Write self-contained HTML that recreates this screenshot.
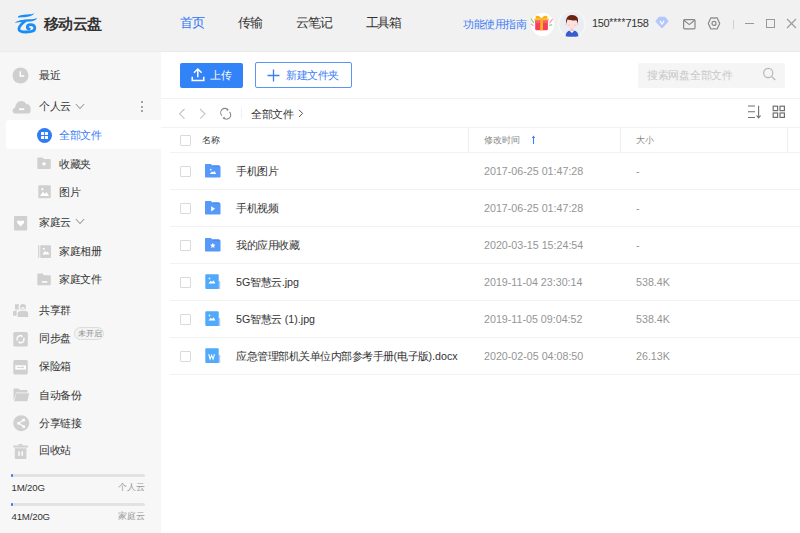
<!DOCTYPE html>
<html><head><meta charset="utf-8">
<style>
*{margin:0;padding:0;box-sizing:border-box}
html,body{width:800px;height:533px;overflow:hidden;background:#fff;font-family:"Liberation Sans",sans-serif;color:#333}
.a{position:absolute;white-space:nowrap}
svg.a{overflow:visible}
#top{position:absolute;left:0;top:0;width:800px;height:52px;background:#f1f1f1}
#side{position:absolute;left:0;top:52px;width:161px;height:481px;background:#f7f7f7}
.nav{font-size:13px;letter-spacing:-1.2px;line-height:15px;color:#333}
.si{letter-spacing:-0.5px;font-size:11px;line-height:12px;color:#333}
.hl{position:absolute;height:1px;background:#f2f2f2}
.vl{position:absolute;width:1px;background:#eeeeee}
.cb{position:absolute;width:10.5px;height:10.5px;border:1px solid #dadada;border-radius:1px;background:#fff}
.fn{letter-spacing:-0.5px;font-size:11px;line-height:12px;color:#333}
.l{font-size:10.7px;letter-spacing:0}
.dt{font-size:10.7px;line-height:11px;color:#959595}
.hd{font-size:9.4px;line-height:10px;color:#888}
</style></head><body>
<div id="top"></div>
<div class="a" style="left:0;top:51px;width:800px;height:1px;background:#ebebeb"></div>
<div id="side"></div>

<!-- ============ TOP BAR ============ -->
<svg class="a" style="left:12px;top:10px" width="30" height="28" viewBox="0 0 30 28">
  <path d="M6 6.4 C9 4.6 15 4.6 18.5 4.3 C20 4.1 21 3.6 22 2.9 C21.2 5.5 18 6.6 14 6.9 C10 7.2 8 7.3 6 7.6 Z" fill="#1a8cf5"/>
  <path d="M3 12.4 C7 9.8 13 9.4 18 9.2 C21 9.1 23 8.8 25.2 7.9 C24.2 10.3 21 11.2 17.5 11.5 C12 11.8 8 12 3 12.8 Z" fill="#1a8cf5"/>
  <path d="M13.2 11 C10 13.5 6.9 16.5 6.9 19 C6.9 21.5 9.5 22 14 22 C19.5 22 22.8 21 22.8 18.2 C22.8 15.5 20.5 14.6 18.5 14.6 C16.5 14.6 15.3 15.8 15.3 17.3 C15.3 18.5 16.2 19 17.3 18.8" fill="none" stroke="#1a8cf5" stroke-width="2.8" stroke-linecap="round"/>
</svg>
<div class="a" style="left:43.5px;top:15px;letter-spacing:-0.4px;font-size:15px;line-height:17px;font-weight:bold;color:#333">移动云盘</div>

<div class="a nav" style="left:180px;top:15px;color:#2f74f6">首页</div>
<div class="a nav" style="left:238px;top:15px">传输</div>
<div class="a nav" style="left:296px;top:15px">云笔记</div>
<div class="a nav" style="left:365.7px;top:15px">工具箱</div>

<div class="a" style="left:463px;top:18px;letter-spacing:-0.4px;font-size:11px;line-height:12px;color:#3d7ef5">功能使用指南</div>
<!-- gift -->
<div class="a" style="left:530.5px;top:12.5px;width:23px;height:23px;border-radius:50%;background:#fff"></div>
<svg class="a" style="left:530px;top:12px" width="23" height="23" viewBox="0 0 23 23">
  <path d="M11.5 6.8 C10 3.2 6.2 3 5.6 4.6 C5.2 5.8 6 6.8 7 7.2 Z M11.5 6.8 C13 3.2 16.8 3 17.4 4.6 C17.8 5.8 17 6.8 16 7.2 Z" fill="#f9ae1a"/>
  <rect x="4.3" y="6.4" width="14.5" height="2.4" rx="0.6" fill="#fcc22a"/>
  <path d="M5.2 8.6 L17.9 8.6 L17.9 17 C17.9 17.7 17.4 18.2 16.7 18.2 L6.4 18.2 C5.7 18.2 5.2 17.7 5.2 17 Z" fill="#f73d5a"/>
  <rect x="5.2" y="8.6" width="12.7" height="2.6" fill="#fb5b70"/>
  <rect x="10.2" y="6.4" width="2.8" height="11.8" fill="#f9b020"/>
  <path d="M1.2 6.8 L3.6 10.6" stroke="#7fd66a" stroke-width="1.1" stroke-linecap="round"/>
  <path d="M1.2 12 L3.2 13.6" stroke="#f894b0" stroke-width="1.1" stroke-linecap="round"/>
  <path d="M22.3 7.4 L19.8 10.8" stroke="#f894b0" stroke-width="1.1" stroke-linecap="round"/>
  <path d="M19.3 13.2 L21.8 12.9" stroke="#7fd66a" stroke-width="1.1" stroke-linecap="round"/>
</svg>
<!-- avatar -->
<svg class="a" style="left:558px;top:10px" width="28" height="29" viewBox="0 0 28 29">
  <circle cx="13.9" cy="14.2" r="13.2" fill="#eaedf2" stroke="#f8f8f8" stroke-width="1.2"/>
  <path d="M7.6 26.2 C7.8 22.8 9.5 20.8 12 20.8 L16 20.8 C18.5 20.8 20.2 22.8 20.4 26.2 C17 27 11 27 7.6 26.2 Z" fill="#3b5ccf"/>
  <path d="M11.6 20.8 L13.9 23 L16.2 20.8 Z" fill="#fff"/>
  <rect x="12.6" y="17.5" width="2.6" height="3.6" fill="#f8c4c4"/>
  <circle cx="8.5" cy="14.3" r="1.2" fill="#f9d0d0"/>
  <circle cx="19.3" cy="14.3" r="1.2" fill="#f9d0d0"/>
  <ellipse cx="13.9" cy="13.8" rx="5.1" ry="5" fill="#fde0e0"/>
  <ellipse cx="10.8" cy="15.3" rx="1.2" ry="0.8" fill="#f9c6cc"/>
  <ellipse cx="17" cy="15.3" rx="1.2" ry="0.8" fill="#f9c6cc"/>
  <path d="M8.2 13.8 C7.4 8.2 9.5 5 13.5 4.9 C16.5 4.8 18.6 6 19.4 7.6 C20.3 9.2 20.1 11.6 19.8 13.8 C19.3 11.8 18.9 10.8 18.2 10.2 C15 10.8 11.5 10.4 9.6 9.6 C9 10.8 8.6 12.2 8.2 13.8 Z" fill="#6b2410"/>
</svg>
<div class="a" style="left:592px;top:16.3px;font-size:11px;line-height:13px;letter-spacing:-0.4px;color:#333">150<span style="font-size:10px;letter-spacing:0.2px;vertical-align:1px">****</span>7158</div>
<!-- diamond -->
<svg class="a" style="left:655px;top:16px" width="14" height="13" viewBox="0 0 14 13">
  <path d="M4.3 1.6 L9.7 1.6 L12.8 5.3 L7 11.4 L1.2 5.3 Z" fill="#b3c8f9" stroke="#b3c8f9" stroke-width="1.6" stroke-linejoin="round"/>
  <path d="M5 4.9 L7 8.2 L9 4.9" stroke="#fff" stroke-width="1.1" fill="none"/>
</svg>
<!-- mail -->
<svg class="a" style="left:683px;top:18.8px" width="13" height="11" viewBox="0 0 13 11">
  <rect x="0.6" y="0.6" width="11.4" height="9.2" rx="1" fill="none" stroke="#888" stroke-width="1.2"/>
  <path d="M0.9 1.3 L6.3 5.6 L11.7 1.3" fill="none" stroke="#888" stroke-width="1.2"/>
</svg>
<!-- gear -->
<svg class="a" style="left:707px;top:16px" width="15" height="15" viewBox="0 0 15 15">
  <path d="M1.3 7.4 L3.9 1.8 L5.9 1.8 Q7 2.7 8.1 1.8 L10.1 1.8 L12.7 7.4 L10.1 13 L8.1 13 Q7 12.1 5.9 13 L3.9 13 Z" fill="none" stroke="#888" stroke-width="1.2" stroke-linejoin="round"/>
  <circle cx="7" cy="7.4" r="2" fill="none" stroke="#888" stroke-width="1.2"/>
</svg>
<div class="a" style="left:733px;top:20px;width:1px;height:9px;background:#d0d0d0"></div>
<div class="a" style="left:744.5px;top:23px;width:9px;height:1.2px;background:#999"></div>
<div class="a" style="left:766px;top:19px;width:9px;height:9px;border:1.2px solid #999"></div>
<svg class="a" style="left:786px;top:18px" width="11" height="11" viewBox="0 0 11 11">
  <path d="M1 1 L10 10 M10 1 L1 10" stroke="#9a9a9a" stroke-width="1.1"/>
</svg>

<!-- ============ SIDEBAR ============ -->
<!-- clock -->
<svg class="a" style="left:12px;top:67px" width="17" height="17" viewBox="0 0 17 17">
  <circle cx="8.5" cy="8.5" r="8" fill="#cfcfcf"/>
  <path d="M8.3 4.2 L8.3 9 L12.3 9" fill="none" stroke="#fff" stroke-width="1.5"/>
</svg>
<div class="a si" style="left:39px;top:69px">最近</div>
<!-- cloud -->
<svg class="a" style="left:11.5px;top:100px" width="19" height="14" viewBox="0 0 19 14">
  <path d="M3.5 13.6 C1.8 13.6 0.6 12.3 0.6 10.7 C0.6 9.1 1.7 7.9 3.2 7.7 C3.5 3.8 6 1 9.2 1 C11.5 1 13.3 2.2 14.2 4 C16.6 3.8 18.6 5.8 18.6 8.5 L18.6 10.9 C18.6 12.4 17.4 13.6 15.9 13.6 Z" fill="#cfcfcf"/>
  <rect x="7" y="8.3" width="5.3" height="1.8" fill="#fff"/>
</svg>
<div class="a si" style="left:39px;top:100px">个人云</div>
<svg class="a" style="left:75px;top:103px" width="10" height="7" viewBox="0 0 10 7">
  <path d="M0.8 1 L5 5.5 L9.2 1" fill="none" stroke="#999" stroke-width="1.05"/>
</svg>
<div class="a" style="left:141px;top:101px;width:2px;height:2px;border-radius:1px;background:#888"></div>
<div class="a" style="left:141px;top:105.5px;width:2px;height:2px;border-radius:1px;background:#888"></div>
<div class="a" style="left:141px;top:110px;width:2px;height:2px;border-radius:1px;background:#888"></div>

<div class="a" style="left:6px;top:120px;width:155px;height:28.5px;background:#fff;border-radius:3px 0 0 3px"></div>
<svg class="a" style="left:36.5px;top:127.5px" width="15" height="15" viewBox="0 0 15 15">
  <circle cx="7.5" cy="7.5" r="7.5" fill="#2f7cf6"/>
  <rect x="4" y="4" width="3.1" height="3.1" rx="0.6" fill="#fff"/>
  <rect x="7.9" y="4" width="3.1" height="3.1" rx="0.6" fill="#fff"/>
  <rect x="4" y="7.9" width="3.1" height="3.1" rx="0.6" fill="#fff"/>
  <rect x="7.9" y="7.9" width="3.1" height="3.1" rx="0.6" fill="#fff"/>
</svg>
<div class="a si" style="left:59.3px;top:129px;color:#3d7ef5">全部文件</div>

<!-- folder star -->
<svg class="a" style="left:37px;top:157px" width="14" height="13" viewBox="0 0 14 13">
  <path d="M0.3 1.5 C0.3 0.8 0.7 0.4 1.3 0.4 L5.5 0.4 L7 2 L12.8 2 C13.4 2 13.8 2.4 13.8 3 L13.8 11 C13.8 11.6 13.4 12 12.8 12 L1.3 12 C0.7 12 0.3 11.6 0.3 11 Z" fill="#d0d0d0"/>
  <path d="M7 4.3 L7.75 5.9 L9.4 6.1 L8.2 7.2 L8.5 8.9 L7 8.1 L5.5 8.9 L5.8 7.2 L4.6 6.1 L6.25 5.9 Z" fill="#fff"/>
</svg>
<div class="a si" style="left:59.3px;top:158px">收藏夹</div>
<!-- image -->
<svg class="a" style="left:37.5px;top:185px" width="13" height="14" viewBox="0 0 13 14">
  <rect x="0.3" y="0.3" width="12.5" height="13" rx="1" fill="#d0d0d0"/>
  <circle cx="4.3" cy="4.2" r="1.1" fill="#fff"/>
  <path d="M2 11 L5 6.8 L7 9 L8.5 7 L11 11 Z" fill="#fff"/>
</svg>
<div class="a si" style="left:59.3px;top:186px">图片</div>
<!-- heart box -->
<svg class="a" style="left:14px;top:215.5px" width="14" height="15" viewBox="0 0 14 15">
  <rect x="0" y="0" width="13.2" height="14.5" rx="1.2" fill="#d0d0d0"/>
  <path d="M6.6 10.5 L3.5 7.3 C2.7 6.4 2.9 4.8 4.2 4.5 C5.2 4.2 6 4.8 6.6 5.6 C7.2 4.8 8 4.2 9 4.5 C10.3 4.8 10.5 6.4 9.7 7.3 Z" fill="#fff"/>
</svg>
<div class="a si" style="left:39px;top:216px">家庭云</div>
<svg class="a" style="left:75px;top:218px" width="10" height="7" viewBox="0 0 10 7">
  <path d="M0.8 1 L5 5.5 L9.2 1" fill="none" stroke="#999" stroke-width="1.05"/>
</svg>
<!-- album -->
<svg class="a" style="left:37.5px;top:244.5px" width="14" height="14" viewBox="0 0 14 14">
  <rect x="0" y="0.3" width="1.4" height="12.6" fill="#d6d6d6"/>
  <rect x="2.2" y="0.3" width="10.8" height="12.6" rx="0.8" fill="#d0d0d0"/>
  <circle cx="5.8" cy="3.8" r="1" fill="#fff"/>
  <path d="M4.3 9.5 L7 5.8 L8.6 7.6 L9.6 6.6 L11.6 9.5 Z" fill="#fff"/>
</svg>
<div class="a si" style="left:59.3px;top:245px">家庭相册</div>
<!-- folder dash -->
<svg class="a" style="left:37px;top:272.5px" width="14" height="13" viewBox="0 0 14 13">
  <path d="M0.3 1.5 C0.3 0.8 0.7 0.4 1.3 0.4 L5.5 0.4 L7 2.2 L12.8 2.2 C13.4 2.2 13.8 2.6 13.8 3.2 L13.8 11.2 C13.8 11.8 13.4 12.2 12.8 12.2 L1.3 12.2 C0.7 12.2 0.3 11.8 0.3 11.2 Z" fill="#d0d0d0"/>
  <rect x="4.8" y="8.2" width="5.5" height="1.5" fill="#fff"/>
</svg>
<div class="a si" style="left:59.3px;top:273px">家庭文件</div>
<!-- group -->
<svg class="a" style="left:13px;top:304px" width="16" height="14" viewBox="0 0 16 14">
  <path d="M2 0.2 L6 0.2 L6 2.2 L5 3.3 L6 4.5 L6 5.5 L2 5.5 Z" fill="#d0d0d0"/>
  <path d="M0 11.7 L0 8.5 C0 7.3 1 6.6 2.5 6.6 L4.2 6.6 L3.6 7.6 L3.6 11.7 Z" fill="#d0d0d0"/>
  <circle cx="10" cy="3" r="3" fill="#d0d0d0"/>
  <ellipse cx="10" cy="4.3" rx="1.6" ry="1.3" fill="#f3f3f3"/>
  <path d="M4.6 13 L4.6 9.5 C4.6 8 5.8 7 7.5 7 L12.5 7 C14.2 7 15.2 8 15.2 9.5 L15.2 13 Z" fill="#d0d0d0"/>
</svg>
<div class="a si" style="left:39px;top:304px">共享群</div>
<!-- sync -->
<svg class="a" style="left:13px;top:331.5px" width="15" height="15" viewBox="0 0 15 15">
  <rect x="0.3" y="0" width="14.5" height="14.4" rx="1.5" fill="#d0d0d0"/>
  <path d="M4.2 8.6 A3.5 3.5 0 0 1 8.8 4" fill="none" stroke="#fff" stroke-width="1.4"/>
  <path d="M10.8 5.8 A3.5 3.5 0 0 1 6.2 10.4" fill="none" stroke="#fff" stroke-width="1.4"/>
  <path d="M8 2.6 L10 4.2 L8 5.6 Z M7 8.8 L5 10.3 L7 11.8 Z" fill="#fff"/>
</svg>
<div class="a si" style="left:39px;top:332px">同步盘</div>
<div class="a" style="left:74px;top:327px;width:30px;height:12.5px;border:1px solid #dcdcdc;border-radius:6.5px;background:#f3f3f3"></div>
<div class="a" style="left:78.3px;top:328.5px;font-size:7.5px;line-height:9px;color:#8a8a8a">未开启</div>
<!-- safe -->
<svg class="a" style="left:13px;top:359.5px" width="15" height="15" viewBox="0 0 15 15">
  <rect x="0.3" y="0" width="14.5" height="14.5" rx="1.5" fill="#d0d0d0"/>
  <rect x="2.3" y="5.3" width="10.6" height="4.3" fill="#fff"/>
  <path d="M4 7.4 L10.5 7.4 M9.3 6.3 L10.6 7.4 L9.3 8.5" fill="none" stroke="#d0d0d0" stroke-width="0.9"/>
</svg>
<div class="a si" style="left:39px;top:360px">保险箱</div>
<!-- backup folder -->
<svg class="a" style="left:12.5px;top:388px" width="17" height="14" viewBox="0 0 17 14">
  <path d="M0.5 12.5 L0.5 1.3 C0.5 0.8 0.8 0.5 1.3 0.5 L5.5 0.5 L7 2 L13.8 2 C14.3 2 14.6 2.3 14.6 2.8 L14.6 4.5 L3.3 4.5 Z" fill="#d0d0d0"/>
  <path d="M3.3 5.3 L16.2 5.3 L14.3 13.2 L1.2 13.2 Z" fill="#d0d0d0"/>
</svg>
<div class="a si" style="left:39px;top:388.5px">自动备份</div>
<!-- share -->
<svg class="a" style="left:12.5px;top:414.5px" width="17" height="17" viewBox="0 0 17 17">
  <circle cx="8.2" cy="8.2" r="8" fill="#d0d0d0"/>
  <path d="M10.5 5 L5.8 8.3 L10.5 11.5" fill="none" stroke="#fff" stroke-width="1.1"/>
  <circle cx="10.6" cy="5" r="1.5" fill="#fff"/>
  <circle cx="5.6" cy="8.3" r="1.5" fill="#fff"/>
  <circle cx="10.6" cy="11.5" r="1.5" fill="#fff"/>
</svg>
<div class="a si" style="left:39px;top:416.5px">分享链接</div>
<!-- trash -->
<svg class="a" style="left:13px;top:444px" width="16" height="16" viewBox="0 0 16 16">
  <rect x="5.5" y="0" width="4" height="1.6" fill="#d0d0d0"/>
  <rect x="0.3" y="1.5" width="14.6" height="2" fill="#d0d0d0"/>
  <path d="M1.8 4.3 L13.4 4.3 L13.4 14 C13.4 14.6 13 15 12.4 15 L2.8 15 C2.2 15 1.8 14.6 1.8 14 Z" fill="#d0d0d0"/>
  <rect x="5.3" y="7.3" width="1.4" height="4.5" fill="#fff"/>
  <rect x="8.5" y="7.3" width="1.4" height="4.5" fill="#fff"/>
</svg>
<div class="a si" style="left:39px;top:444px">回收站</div>

<!-- storage -->
<div class="a" style="left:11px;top:474px;width:134px;height:3px;border-radius:1.5px;background:#e2e2e2"></div>
<div class="a" style="left:11px;top:474px;width:2px;height:3px;border-radius:1.5px;background:#2f7cf6"></div>
<div class="a" style="left:11.5px;top:482px;font-size:9.6px;line-height:11px;color:#333;letter-spacing:-0.15px">1M/20G</div>
<div class="a" style="left:118px;top:482px;font-size:9px;line-height:11px;color:#999">个人云</div>
<div class="a" style="left:11px;top:503px;width:134px;height:3px;border-radius:1.5px;background:#e2e2e2"></div>
<div class="a" style="left:11px;top:503px;width:2px;height:3px;border-radius:1.5px;background:#2f7cf6"></div>
<div class="a" style="left:11.5px;top:511px;font-size:9.6px;line-height:11px;color:#333;letter-spacing:-0.15px">41M/20G</div>
<div class="a" style="left:118px;top:511px;font-size:9px;line-height:11px;color:#999">家庭云</div>

<!-- ============ MAIN ============ -->
<div class="a" style="left:180px;top:63px;width:63px;height:25px;background:#3282f8;border-radius:2px"></div>
<svg class="a" style="left:191px;top:68px" width="14" height="14" viewBox="0 0 14 14">
  <path d="M3 4.8 L6.8 1 L10.6 4.8 M6.8 1.3 L6.8 9.2" fill="none" stroke="#fff" stroke-width="1.5"/>
  <path d="M1.2 8.8 L1.2 12.6 L12.8 12.6 L12.8 8.8" fill="none" stroke="#fff" stroke-width="1.5"/>
</svg>
<div class="a" style="left:210px;top:69px;letter-spacing:-0.5px;font-size:11px;line-height:12px;color:#fff">上传</div>

<div class="a" style="left:255px;top:62px;width:97px;height:26px;border:1px solid #5a95f5;border-radius:2px"></div>
<svg class="a" style="left:267px;top:68.5px" width="13" height="13" viewBox="0 0 13 13">
  <path d="M6.5 0.5 L6.5 12.5 M0.5 6.5 L12.5 6.5" stroke="#3d7ef5" stroke-width="1.3"/>
</svg>
<div class="a" style="left:286px;top:69px;letter-spacing:-0.5px;font-size:11px;line-height:12px;color:#3d7ef5">新建文件夹</div>

<div class="a" style="left:638px;top:63px;width:147px;height:25px;background:#f5f5f5;border-radius:2px"></div>
<div class="a" style="left:647px;top:69px;letter-spacing:-0.3px;font-size:11px;line-height:12px;color:#c8c8c8">搜索网盘全部文件</div>
<svg class="a" style="left:762px;top:67px" width="15" height="15" viewBox="0 0 15 15">
  <circle cx="6.2" cy="6" r="4.6" fill="none" stroke="#b8b8b8" stroke-width="1.2"/>
  <path d="M9.6 9.4 L13.2 13" stroke="#b8b8b8" stroke-width="1.3"/>
</svg>

<div class="hl" style="left:161px;top:97.5px;width:639px;background:#f2f2f2"></div>

<svg class="a" style="left:178px;top:108px" width="8" height="12" viewBox="0 0 8 12">
  <path d="M6.5 1 L1.5 5.8 L6.5 10.6" fill="none" stroke="#c4c4c4" stroke-width="1.1"/>
</svg>
<svg class="a" style="left:198.5px;top:108px" width="8" height="12" viewBox="0 0 8 12">
  <path d="M1 1 L6 5.8 L1 10.6" fill="none" stroke="#c4c4c4" stroke-width="1.1"/>
</svg>
<svg class="a" style="left:219.6px;top:108.2px" width="11.6" height="11.6" viewBox="0 0 13 13">
  <path d="M2.2 8.5 A4.6 4.6 0 0 1 8.8 1.8" fill="none" stroke="#888" stroke-width="1.2"/>
  <path d="M10.6 4.4 A4.6 4.6 0 0 1 4 11.2" fill="none" stroke="#888" stroke-width="1.2"/>
  <path d="M7.6 0.2 L10 2 L7.6 3.6 Z M5.2 9.6 L2.8 11.2 L5.2 12.8 Z" fill="#888"/>
</svg>
<div class="a" style="left:240.5px;top:108px;width:1px;height:11px;background:#f0f0f0"></div>
<div class="a" style="left:251px;top:108px;letter-spacing:-0.5px;font-size:11px;line-height:12px;color:#333">全部文件</div>
<svg class="a" style="left:297.8px;top:109.3px" width="7" height="10" viewBox="0 0 7 10">
  <path d="M1 0.8 L4.6 4.4 L1 8" fill="none" stroke="#555" stroke-width="1"/>
</svg>
<!-- sort & grid -->
<svg class="a" style="left:747px;top:105px" width="15" height="14" viewBox="0 0 15 14">
  <path d="M1 1 L8 1 M1 6.8 L8 6.8 M1 12.5 L8 12.5" stroke="#707070" stroke-width="1.1"/>
  <path d="M11.6 0.8 L11.6 12.5 M9.6 10.5 L11.6 12.8 L13.6 10.5" fill="none" stroke="#707070" stroke-width="1.1"/>
</svg>
<svg class="a" style="left:772px;top:105px" width="14" height="14" viewBox="0 0 14 14">
  <rect x="1.2" y="1.2" width="4.4" height="4.4" fill="none" stroke="#707070" stroke-width="1.2"/>
  <rect x="8" y="1.2" width="4.4" height="4.4" fill="none" stroke="#707070" stroke-width="1.2"/>
  <rect x="1.2" y="8" width="4.4" height="4.4" fill="none" stroke="#707070" stroke-width="1.2"/>
  <rect x="8" y="8" width="4.4" height="4.4" fill="none" stroke="#707070" stroke-width="1.2"/>
</svg>

<div class="hl" style="left:161px;top:127px;width:639px;background:#f2f2f2"></div>

<div class="cb" style="left:180px;top:135px"></div>
<div class="a hd" style="left:202px;top:134.5px;color:#3a3a3a">名称</div>
<div class="vl" style="left:468px;top:128px;height:24px"></div>
<div class="a hd" style="left:484px;top:134.5px">修改时间</div>
<svg class="a" style="left:530.5px;top:135px" width="5" height="10" viewBox="0 0 5 10">
  <path d="M2.5 9 L2.5 1.5" stroke="#3d7ef5" stroke-width="1.1"/>
  <path d="M0.8 3 L2.5 0.6 L4.2 3 Z" fill="#3d7ef5"/>
</svg>
<div class="vl" style="left:620px;top:128px;height:24px"></div>
<div class="a hd" style="left:636px;top:134.5px">大小</div>
<div class="vl" style="left:787px;top:128px;height:24px"></div>
<div class="hl" style="left:170px;top:152px;width:630px"></div>

<!-- rows -->
<div class="cb" style="left:180px;top:166px"></div>
<svg class="a" style="left:205px;top:164px" width="16" height="14" viewBox="0 0 16 14">
  <path d="M0 1 C0 0.4 0.4 0 1 0 L6 0 L7.3 1.6 L14 1.6 C14.6 1.6 15.5 2.4 15.5 3 L15.5 12.5 C15.5 13.1 15.1 13.5 14.5 13.5 L1 13.5 C0.4 13.5 0 13.1 0 12.5 Z" fill="#5699f8"/>
  <path d="M7.3 1.6 L14 1.6 L14.8 2.6 L8 2.6 Z" fill="#3d80f0"/>
  <circle cx="5.7" cy="5.6" r="0.9" fill="#fff" opacity="0.85"/>
  <path d="M4.8 10 L7 7.2 L8.2 8.4 L9.4 7 L11.2 10 Z" fill="#fff"/>
</svg>
<div class="a fn" style="left:236px;top:165.3px">手机图片</div>
<div class="a dt" style="left:484px;top:166px">2017-06-25 01:47:28</div>
<div class="a dt" style="left:636px;top:166px">-</div>
<div class="hl" style="left:170px;top:189px;width:630px"></div>
<div class="cb" style="left:180px;top:203px"></div>
<svg class="a" style="left:205px;top:201px" width="16" height="14" viewBox="0 0 16 14">
  <path d="M0 1 C0 0.4 0.4 0 1 0 L6 0 L7.3 1.6 L14 1.6 C14.6 1.6 15.5 2.4 15.5 3 L15.5 12.5 C15.5 13.1 15.1 13.5 14.5 13.5 L1 13.5 C0.4 13.5 0 13.1 0 12.5 Z" fill="#5699f8"/>
  <path d="M7.3 1.6 L14 1.6 L14.8 2.6 L8 2.6 Z" fill="#3d80f0"/>
  <path d="M6.2 5.2 L10 7.8 L6.2 10.4 Z" fill="#fff"/>
</svg>
<div class="a fn" style="left:236px;top:202.3px">手机视频</div>
<div class="a dt" style="left:484px;top:203px">2017-06-25 01:47:28</div>
<div class="a dt" style="left:636px;top:203px">-</div>
<div class="hl" style="left:170px;top:226px;width:630px"></div>
<div class="cb" style="left:180px;top:240px"></div>
<svg class="a" style="left:205px;top:238px" width="16" height="14" viewBox="0 0 16 14">
  <path d="M0 1 C0 0.4 0.4 0 1 0 L6 0 L7.3 1.6 L14 1.6 C14.6 1.6 15.5 2.4 15.5 3 L15.5 12.5 C15.5 13.1 15.1 13.5 14.5 13.5 L1 13.5 C0.4 13.5 0 13.1 0 12.5 Z" fill="#5699f8"/>
  <path d="M7.3 1.6 L14 1.6 L14.8 2.6 L8 2.6 Z" fill="#3d80f0"/>
  <path d="M7.8 4.8 L8.6 6.6 L10.5 6.8 L9.1 8 L9.5 9.9 L7.8 8.9 L6.1 9.9 L6.5 8 L5.1 6.8 L7 6.6 Z" fill="#fff"/>
</svg>
<div class="a fn" style="left:236px;top:239.3px">我的应用收藏</div>
<div class="a dt" style="left:484px;top:240px">2020-03-15 15:24:54</div>
<div class="a dt" style="left:636px;top:240px">-</div>
<div class="hl" style="left:170px;top:263px;width:630px"></div>
<div class="cb" style="left:180px;top:277px"></div>
<svg class="a" style="left:205.2px;top:273.5px" width="16" height="16" viewBox="0 0 16 16">
  <rect x="13" y="7" width="2.2" height="8" fill="#a9cbfa"/>
  <rect x="0.3" y="0.2" width="13.4" height="14.8" rx="1" fill="#50aaf9"/>
  <circle cx="4.5" cy="4.5" r="0.9" fill="#fff" opacity="0.85"/>
  <path d="M3.4 9.6 L5.8 6.8 L7.1 8 L8.6 6.2 L10.4 9.6 Z" fill="#fff"/>
</svg>
<div class="a fn" style="left:236px;top:276.3px"><span class="l">5G</span>智慧云<span class="l">.jpg</span></div>
<div class="a dt" style="left:484px;top:277px">2019-11-04 23:30:14</div>
<div class="a dt" style="left:636px;top:277px">538.4K</div>
<div class="hl" style="left:170px;top:300px;width:630px"></div>
<div class="cb" style="left:180px;top:314px"></div>
<svg class="a" style="left:205.2px;top:310.5px" width="16" height="16" viewBox="0 0 16 16">
  <rect x="13" y="7" width="2.2" height="8" fill="#a9cbfa"/>
  <rect x="0.3" y="0.2" width="13.4" height="14.8" rx="1" fill="#50aaf9"/>
  <circle cx="4.5" cy="4.5" r="0.9" fill="#fff" opacity="0.85"/>
  <path d="M3.4 9.6 L5.8 6.8 L7.1 8 L8.6 6.2 L10.4 9.6 Z" fill="#fff"/>
</svg>
<div class="a fn" style="left:236px;top:313.3px"><span class="l">5G</span>智慧云<span class="l"> (1).jpg</span></div>
<div class="a dt" style="left:484px;top:314px">2019-11-05 09:04:52</div>
<div class="a dt" style="left:636px;top:314px">538.4K</div>
<div class="hl" style="left:170px;top:337px;width:630px"></div>
<div class="cb" style="left:180px;top:351px"></div>
<svg class="a" style="left:205.2px;top:347.5px" width="16" height="16" viewBox="0 0 16 16">
  <rect x="13" y="7" width="2.2" height="8" fill="#a9cbfa"/>
  <rect x="0.3" y="0.2" width="13.4" height="14.8" rx="1" fill="#50aaf9"/>
  <path d="M3.7 6.1 L5.1 11.1 L6.6 7.2 L8.1 11.1 L9.5 6.1" fill="none" stroke="#fff" stroke-width="1.1"/>
</svg>
<div class="a fn" style="left:236px;top:350.3px">应急管理部机关单位内部参考手册<span class="l">(</span>电子版<span class="l">).docx</span></div>
<div class="a dt" style="left:484px;top:351px">2020-02-05 04:08:50</div>
<div class="a dt" style="left:636px;top:351px">26.13K</div>
<div class="hl" style="left:170px;top:374px;width:630px"></div>
</body></html>
